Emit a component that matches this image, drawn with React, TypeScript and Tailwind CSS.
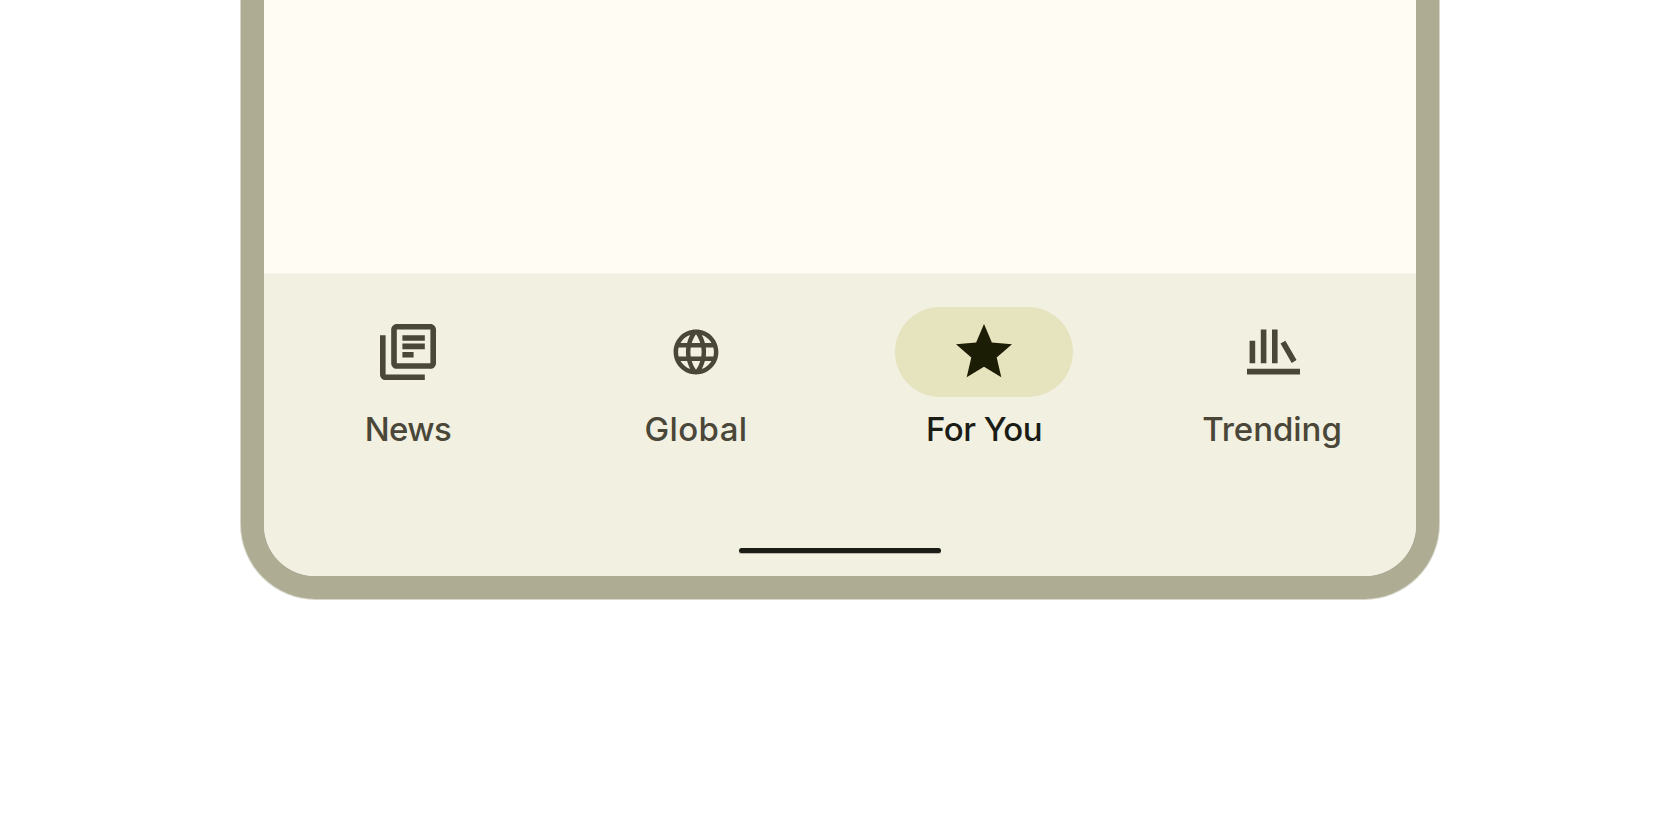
import type { ReactNode } from 'react';

type Item = { label: string; icon: ReactNode; active?: boolean; text: string };

const items: Item[] = [
  {
    label: 'News',
    text: 'tracking-[-0.6px]',
    icon: (
      <path
        fillRule="evenodd"
        d="M4 6H2v14c0 1.1.9 2 2 2h14v-2H4V6zm16-4H8c-1.100 0-2 .9-2 2v12c0 1.100.9 2 2 2h12c1.100 0 2-.9 2-2V4c0-1.100-.9-2-2-2zm0 14H8V4h12v12zM10 9h8v2h-8V9zm0 3h4v2h-4v-2zm0-6h8v2h-8V6z"
      />
    ),
  },
  {
    label: 'Global',
    text: 'tracking-[0.4px]',
    icon: (
      <path
        transform="translate(2.4 2.4) scale(.8)"
        d="M11.990 2C6.470 2 2 6.480 2 12s4.470 10 9.990 10C17.520 22 22 17.520 22 12S17.520 2 11.990 2zm6.930 6h-2.950c-.320-1.250-.780-2.450-1.380-3.560 1.840.630 3.370 1.910 4.330 3.560zM12 4.040c.830 1.200 1.480 2.530 1.910 3.960h-3.820c.430-1.430 1.080-2.760 1.910-3.960zM4.260 14C4.100 13.360 4 12.690 4 12s.1-1.360.26-2h3.380c-.08.66-.14 1.320-.14 2s.06 1.340.14 2H4.260zm.82 2h2.950c.32 1.250.78 2.450 1.380 3.560-1.840-.63-3.370-1.900-4.330-3.560zm2.950-8H5.080c.96-1.660 2.490-2.930 4.330-3.560C8.810 5.550 8.350 6.750 8.030 8zM12 19.960c-.83-1.200-1.480-2.530-1.910-3.960h3.820c-.43 1.430-1.080 2.760-1.910 3.960zM14.340 14H9.660c-.09-.66-.16-1.320-.16-2s.07-1.350.16-2h4.680c.09.65.16 1.320.16 2s-.07 1.340-.16 2zm.25 5.560c.6-1.110 1.060-2.310 1.380-3.560h2.950c-.96 1.650-2.490 2.930-4.330 3.560zM16.360 14c.08-.66.14-1.320.14-2s-.06-1.340-.14-2h3.380c.16.64.26 1.310.26 2s-.1 1.360-.26 2h-3.380z"
      />
    ),
  },
  {
    label: 'For You',
    text: 'tracking-[-0.5px]',
    active: true,
    icon: (
      <path d="M12 17.270 18.180 21l-1.640-7.030L22 9.240l-7.190-.610L12 2 9.190 8.630 2 9.240l5.460 4.730L5.820 21z" />
    ),
  },
  {
    label: 'Trending',
    text: 'tracking-[-0.05px]',
    icon: <path d="M4 8h2v8H4zM8 4h2v12H8zM12 4h2v12h-2zM15.040 8.970l1.730-1 4 6.930-1.730 1zM3.070 18H22v2H3.070z" />,
  },
];

function NavItem({ label, icon, active, text }: Item) {
  return (
    <button
      className={`flex w-72 flex-col items-center ${active ? 'text-[#1c1c17]' : 'text-[#4a4739]'}`}
    >
      <span
        className={`flex h-[90px] w-[178px] items-center justify-center rounded-full ${
          active ? 'bg-[#e6e3bf] text-[#1c1d05]' : ''
        }`}
      >
        <svg viewBox="-0.143 -0.143 24.286 24.286" className="size-[68px] shrink-0" fill="currentColor">
          {icon}
        </svg>
      </span>
      <span className={`mt-[10px] text-[33px] leading-[44px] font-medium whitespace-nowrap ${text}`}>
        {label}
      </span>
    </button>
  );
}

export default function App() {
  return (
    <div className="flex h-[840px] w-full justify-center overflow-hidden bg-white font-['Inter',sans-serif]">
      <div className="h-[599px] w-[1198px] rounded-b-[75px] bg-[#aeac92] px-[23px] pb-[23px] shadow-[0_0_0_1px_#d6d5c8]">
        <main className="flex h-[576px] flex-col overflow-hidden rounded-b-[51px] bg-[#fffcf4]">
          <div className="h-[273px] shrink-0" />
          <nav className="flex h-[303px] flex-col items-center border-t border-[#f7f5e9] bg-[#f1f0e1] pt-[33px]">
            <div className="flex h-[241px] shrink-0">
              {items.map((item) => (
                <NavItem key={item.label} {...item} />
              ))}
            </div>
            <div className="h-[5px] w-[202px] shrink-0 rounded-full bg-[#1c1c17] shadow-[0_1px_0_#b9b8ac]" />
          </nav>
        </main>
      </div>
    </div>
  );
}
